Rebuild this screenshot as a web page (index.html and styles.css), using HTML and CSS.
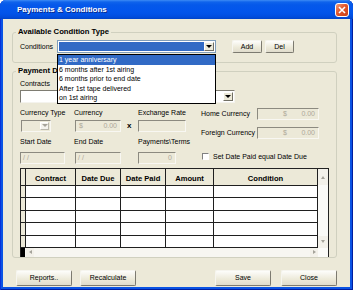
FILE: index.html
```html
<!DOCTYPE html>
<html lang="en">
<head>
<meta charset="UTF-8">
<title>Payments &amp; Conditions</title>
<link rel="stylesheet" href="styles.css">
</head>
<body>
<div class="window">
    <div class="titlebar">
        <span class="title">Payments &amp; Conditions</span>
        <span class="close-btn">
            <svg width="8" height="8" viewBox="0 0 8 8"><path d="M1 1L7 7M7 1L1 7" stroke="#fff" stroke-width="1.6"/></svg>
        </span>
    </div>
    <div class="client">
        <fieldset class="group group-top">
            <legend>Available Condition Type</legend>
            <div class="cond-row">
                <span class="cond-label">Conditions</span>
                <div class="combo combo-cond">
                    <span class="combo-sel"></span>
                    <span class="drop-btn"><span class="tri"></span></span>
                    <ul class="droplist">
                        <li class="active">1 year anniversary</li>
                        <li>6 months after 1st airing</li>
                        <li>6 months prior to end date</li>
                        <li>After 1st tape delivered</li>
                        <li>on 1st airing</li>
                    </ul>
                </div>
                <button class="btn btn-add">Add</button>
                <button class="btn btn-del">Del</button>
            </div>
        </fieldset>

        <fieldset class="group group-pay">
            <legend>Payment Details</legend>
            <div class="contracts-label">Contracts</div>
            <div class="combo combo-contracts">
                <span class="combo-field"></span>
                <span class="drop-btn"><span class="tri"></span></span>
            </div>

            <div class="fields">
                <div class="fields-left">
                    <span>Currency Type</span>
                    <span>Currency</span>
                    <span></span>
                    <span>Exchange Rate</span>

                    <div class="combo combo-disabled">
                        <span class="combo-field"></span>
                        <span class="drop-btn drop-off"><span class="tri tri-off"></span></span>
                    </div>
                    <div class="tb tb-money"><span>$</span><span>0.00</span></div>
                    <span class="times">x</span>
                    <div class="tb tb-rate"></div>

                    <span>Start Date</span>
                    <span>End Date</span>
                    <span></span>
                    <span>Payments\Terms</span>

                    <div class="tb tb-start">/ /</div>
                    <div class="tb tb-end">/ /</div>
                    <span></span>
                    <div class="tb tb-terms">0</div>
                </div>
                <div class="fields-right">
                    <div class="pair pair-home">
                        <span class="pair-lbl">Home Currency</span>
                        <div class="tb tb-home"><span>$</span><span>0.00</span></div>
                    </div>
                    <div class="pair pair-foreign">
                        <span class="pair-lbl">Foreign Currency</span>
                        <div class="tb tb-home"><span>$</span><span>0.00</span></div>
                    </div>
                    <label class="check-row"><span class="checkbox"></span>Set Date Paid equal Date Due</label>
                </div>
            </div>

            <div class="grid">
                <div class="grid-body">
                    <div class="cells">
                        <div class="hd"></div><div class="hd">Contract</div><div class="hd">Date Due</div><div class="hd">Date Paid</div><div class="hd">Amount</div><div class="hd">Condition</div>
                        <div class="ind"></div><div></div><div></div><div></div><div></div><div></div>
                        <div class="ind"></div><div></div><div></div><div></div><div></div><div></div>
                        <div class="ind"></div><div></div><div></div><div></div><div></div><div></div>
                        <div class="ind"></div><div></div><div></div><div></div><div></div><div></div>
                        <div class="ind"></div><div></div><div></div><div></div><div></div><div></div>
                    </div>
                    <div class="vscroll">
                        <span class="sb-btn sb-up"><span class="arr arr-up"></span></span>
                        <span class="sb-track"></span>
                        <span class="sb-btn sb-down"><span class="arr arr-down"></span></span>
                    </div>
                </div>
                <div class="hscroll">
                    <span class="hs-black"></span>
                    <span class="hs-btn"><span class="arr arr-left"></span></span>
                    <span class="hs-track"></span>
                    <span class="hs-btn"><span class="arr arr-right"></span></span>
                    <span class="hs-corner"></span>
                </div>
            </div>
        </fieldset>

        <div class="footer">
            <button class="btn btn-wide btn-reports">Reports..</button>
            <button class="btn btn-wide">Recalculate</button>
            <button class="btn btn-wide btn-save">Save</button>
            <button class="btn btn-wide">Close</button>
        </div>
    </div>
</div>
</body>
</html>
```

FILE: styles.css
```css
*{
    margin: 0;
    padding: 0;
    box-sizing: border-box;
}
body{
    font: 7px/1 "Liberation Sans", Arial, sans-serif;
    color: #000;
    background: #fff;
}
.window{
    width: 353px;
    height: 290px;
    display: flex;
    flex-direction: column;
    background: #0A53E4;
    border-radius: 6px 6px 0 0;
    overflow: hidden;
    box-shadow: inset 1px 0 #0831D9, inset -1px 0 #001EA0, inset 0 -1px #001EA0;
}

/* title bar */
.titlebar{
    height: 19px;
    flex-shrink: 0;
    display: flex;
    align-items: center;
    padding: 0 4px 0 17px;
    background: linear-gradient(#3D8BF5 0, #0F63EC 2px, #0558EA 5px, #0356EC 10px, #0253E8 14px, #014CDC 17px, #0043C8 19px);
}
.title{
    color: #fff;
    font-weight: bold;
    font-size: 8px;
    text-shadow: 1px 1px 0 #0C2A8A;
}
.close-btn{
    margin-left: auto;
    width: 14px;
    height: 14px;
    border: 1px solid #fff;
    border-radius: 3px;
    background: linear-gradient(135deg, #F29B7E, #E2562C 45%, #C73F18);
    display: flex;
    align-items: center;
    justify-content: center;
}

/* dialog body */
.client{
    flex: 1;
    margin: 0 3px 3px;
    background: #ECE9D8;
    display: flex;
    flex-direction: column;
}
.group{
    border: 1px solid #D0D0BF;
    border-radius: 3px;
    margin: 0 13px 0 9px;
    padding: 0;
    min-width: 0;
}
.group legend{
    font-weight: bold;
    font-size: 7.7px;
    line-height: 10px;
    padding: 0 2px;
    margin-left: 3px;
}
.group-top{
    margin-top: 8px;
}
.group-pay{
    margin-top: 3px;
}

.cond-row{
    display: flex;
    align-items: center;
    height: 13px;
    margin: 3px 0 9px 7px;
}
.cond-label{
    width: 37px;
}

/* combos */
.combo{
    display: flex;
    height: 13px;
    padding: 1px;
    background: #fff;
    position: relative;
}
.combo-cond{
    width: 159px;
    border: 1px solid #7F9DB9;
}
.combo-sel{
    flex: 1;
    background: #316AC5;
}
.combo-field{
    flex: 1;
}
.drop-btn{
    width: 10px;
    display: flex;
    align-items: center;
    justify-content: center;
    background: #ECE9D8;
    border: 1px solid;
    border-color: #fff #716F64 #716F64 #fff;
}
.tri{
    width: 0;
    height: 0;
    border-left: 3px solid transparent;
    border-right: 3px solid transparent;
    border-top: 3px solid #000;
}
.droplist{
    position: absolute;
    left: -1px;
    right: -1px;
    top: calc(100% + 2px);
    z-index: 5;
    list-style: none;
    background: #fff;
    border: 1px solid #000;
}
.droplist li{
    height: 9.5px;
    line-height: 9.5px;
    padding-left: 1px;
    white-space: nowrap;
}
.droplist li.active{
    background: #316AC5;
    color: #fff;
}

.combo-contracts{
    width: 215px;
    margin: 1px 0 0 7px;
    border: 1px solid;
    border-color: #7E7C72 #F4F3EE #F4F3EE #7E7C72;
}
.combo-disabled{
    width: 30px;
    height: 12px;
    margin-left: 1px;
    background: #ECE9D8;
    border: 1px solid;
    border-color: #8C8A80 #F8F7F2 #F8F7F2 #8C8A80;
}
.drop-off{
    width: 9px;
    background: #F4F3EE;
    border-color: #fff #B9B7AC #B9B7AC #fff;
}
.tri-off{
    border-top-color: #A5A39A;
}

/* buttons */
.btn{
    font: 7px "Liberation Sans", Arial, sans-serif;
    color: #000;
    height: 13px;
    background: linear-gradient(#FDFDFB, #ECE9D8 60%, #E0DCCD);
    border: 1px solid;
    border-color: #F6F5EF #7C7A70 #7C7A70 #F6F5EF;
    border-radius: 2px;
}
.btn-add{
    width: 30px;
    margin-left: 16px;
}
.btn-del{
    width: 29px;
    margin-left: 3px;
}

/* payment details */
.contracts-label{
    line-height: 10px;
    margin: 3px 0 0 7px;
}
.fields{
    display: flex;
    margin: 3px 0 0 7px;
}
.fields-left{
    display: grid;
    grid-template-columns: 54px 53px 11px 63px;
    grid-template-rows: 13px 13px 19px 13px;
    align-items: center;
}
.tb{
    height: 12px;
    border: 1px solid;
    border-color: #8C8A80 #F8F7F2 #F8F7F2 #8C8A80;
    background: #ECE9D8;
    color: #ACA899;
    display: flex;
    align-items: center;
    padding: 0 3px;
}
.tb-money{
    width: 46px;
    margin-left: 1px;
    justify-content: space-between;
}
.tb-rate{
    width: 48px;
}
.times{
    font-weight: bold;
    font-size: 8px;
}
.tb-start{
    width: 45px;
    padding-left: 2px;
}
.tb-end{
    width: 46px;
    margin-left: 1px;
    padding-left: 2px;
}
.tb-terms{
    width: 38px;
    justify-content: flex-end;
}
.fields-right{
    display: flex;
    flex-direction: column;
}
.pair{
    display: flex;
    align-items: center;
    height: 13px;
}
.pair-home{
    margin-top: 1px;
}
.pair-foreign{
    margin-top: 6px;
}
.pair-lbl{
    width: 56px;
}
.tb-home{
    width: 62px;
    padding: 0 3px 0 25px;
    justify-content: space-between;
}
.check-row{
    display: flex;
    align-items: center;
    height: 13px;
    margin-top: 11px;
    padding-left: 1px;
}
.checkbox{
    width: 7px;
    height: 7px;
    background: #fff;
    border: 1px solid;
    border-color: #808080 #fff #fff #808080;
    margin-right: 4px;
}

/* data grid */
.grid{
    width: 309px;
    margin: 4px 0 0 7px;
    border: 1px solid #222;
    border-bottom: 0;
}
.grid-body{
    display: flex;
}
.cells{
    display: grid;
    grid-template-columns: 4px 49px 44px 44px 47px 103px;
    grid-template-rows: 16px repeat(5, 11.4px);
    gap: 1px;
    background: #1F1F1F;
    padding: 0 1px 1px 0;
}
.cells > div{
    background: #fff;
}
.cells .hd{
    background: #ECE9D8;
    font-weight: bold;
    font-size: 7.6px;
    display: flex;
    align-items: flex-end;
    justify-content: center;
    padding-bottom: 2px;
}
.cells .ind{
    background: #ECE9D8;
}
.vscroll{
    width: 10px;
    display: flex;
    flex-direction: column;
    background: #FAFAF7;
}
.sb-btn, .hs-btn{
    display: flex;
    align-items: center;
    justify-content: center;
    background: #F3F1EA;
}
.sb-up{
    height: 16px;
}
.sb-down{
    height: 12px;
}
.sb-track, .hs-track{
    flex: 1;
}
.hscroll{
    height: 9px;
    display: flex;
    background: #F7F6F1;
}
.hs-black{
    width: 4px;
    margin-right: 1px;
    background: #000;
}
.hs-btn{
    width: 8px;
}
.hs-corner{
    width: 10px;
    background: #FBFBF8;
}
.arr{
    width: 0;
    height: 0;
    border: 2px solid transparent;
}
.arr-up{
    border-top: 0;
    border-bottom: 3px solid #A5A39A;
}
.arr-down{
    border-bottom: 0;
    border-top: 3px solid #A5A39A;
}
.arr-left{
    border-left: 0;
    border-right: 3px solid #A5A39A;
}
.arr-right{
    border-right: 0;
    border-left: 3px solid #A5A39A;
}

/* bottom buttons */
.footer{
    display: flex;
    margin: 12px 13px 0;
}
.btn-wide{
    width: 56px;
    height: 16px;
}
.btn-reports{
    margin-right: 8px;
}
.btn-save{
    margin-left: auto;
    margin-right: 10px;
}
```
